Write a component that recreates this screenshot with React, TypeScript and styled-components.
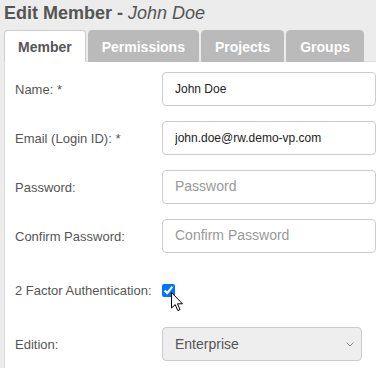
import { FC } from 'react'
import styled, { createGlobalStyle } from 'styled-components'

const GlobalStyle = createGlobalStyle`
  html, body {
    margin: 0;
    padding: 0;
    background: #ececec;
    font-family: "Liberation Sans", Arial, sans-serif;
  }
`

const Page = styled.div`
  width: 376px;
  height: 368px;
  overflow: hidden;
  padding-left: 4px;
  box-sizing: border-box;
`

const Title = styled.h1`
  margin: 0;
  padding-top: 2px;
  font-size: 18px;
  line-height: 22px;
  font-weight: bold;
  color: #555555;
  white-space: nowrap;
`

const TitleName = styled.span`
  font-style: italic;
  font-weight: normal;
`

const TabBar = styled.div`
  display: flex;
  margin-top: 6px;
  height: 31px;
  border-bottom: 1px solid #dddddd;
`

const TabItem = styled.div<{ $active?: boolean }>`
  display: flex;
  align-items: center;
  height: 32px;
  box-sizing: border-box;
  padding: 1px 13px 0;
  margin-right: 2px;
  border: 1px solid ${(p) => (p.$active ? '#cccccc' : '#bababa')};
  border-bottom-color: ${(p) => (p.$active ? '#ffffff' : '#bababa')};
  border-radius: 4px 4px 0 0;
  background: ${(p) => (p.$active ? '#ffffff' : '#bababa')};
  color: ${(p) => (p.$active ? '#555555' : '#ffffff')};
  font-size: 14px;
  font-weight: bold;
  white-space: nowrap;
  position: relative;
  z-index: 1;
`

const Panel = styled.div`
  background: #ffffff;
  border-left: 1px solid #dddddd;
  padding: 10px 0 0 10px;
  min-height: 320px;
`

const Row = styled.div<{ $height?: number }>`
  display: flex;
  align-items: center;
  height: ${(p) => p.$height ?? 34}px;
  margin-bottom: 15px;
`

const Label = styled.label`
  width: 147px;
  flex-shrink: 0;
  font-size: 13px;
  color: #555555;
`

const TextInput = styled.input`
  width: 240px;
  height: 34px;
  box-sizing: border-box;
  padding: 0 12px;
  border: 1px solid #cccccc;
  border-radius: 4px;
  font-family: "Liberation Sans", Arial, sans-serif;
  font-size: 12px;
  color: #222222;
  background: #ffffff;
  outline: none;

  &::placeholder {
    font-size: 14px;
    color: #999999;
  }
`

const CheckWrap = styled.div`
  position: relative;
  display: flex;
`

const Checkbox = styled.input`
  width: 13px;
  height: 13px;
  margin: 1px 0 0 0;
`

const Cursor = styled.svg`
  position: absolute;
  left: 9px;
  top: 9px;
  pointer-events: none;
`

const SelectWrap = styled.div`
  position: relative;
  width: 200px;
`

const Select = styled.select`
  width: 200px;
  height: 34px;
  box-sizing: border-box;
  padding: 0 12px;
  border: 1px solid #cccccc;
  border-radius: 4px;
  background: #eeeeee;
  color: #555555;
  font-family: "Liberation Sans", Arial, sans-serif;
  font-size: 14px;
  appearance: none;
  outline: none;
`

const Chevron = styled.svg`
  position: absolute;
  right: 8px;
  top: 15px;
  pointer-events: none;
`

const fields = [
  { label: 'Name: *', value: 'John Doe' },
  { label: 'Email (Login ID): *', value: 'john.doe@rw.demo-vp.com' },
  { label: 'Password:', placeholder: 'Password' },
  { label: 'Confirm Password:', placeholder: 'Confirm Password' },
]

const tabs = ['Member', 'Permissions', 'Projects', 'Groups']

const App: FC = () => {
  return (
    <Page>
      <GlobalStyle />
      <Title>
        Edit Member - <TitleName>John Doe</TitleName>
      </Title>
      <TabBar>
        {tabs.map((t, i) => (
          <TabItem key={t} $active={i === 0}>
            {t}
          </TabItem>
        ))}
      </TabBar>
      <Panel>
        {fields.map((f) => (
          <Row key={f.label}>
            <Label>{f.label}</Label>
            <TextInput
              type={f.placeholder ? 'password' : 'text'}
              defaultValue={f.value}
              placeholder={f.placeholder}
            />
          </Row>
        ))}
        <Row $height={44}>
          <Label>2 Factor Authentication:</Label>
          <CheckWrap>
            <Checkbox type="checkbox" defaultChecked />
            <Cursor width="13" height="20" viewBox="0 0 13 20">
              <path
                d="M0.5 0.5 L0.5 16 L4.2 12.6 L6.8 18.6 L9 17.6 L6.5 11.8 L11.5 11.8 Z"
                fill="#ffffff"
                stroke="#000000"
                strokeWidth="1"
              />
            </Cursor>
          </CheckWrap>
        </Row>
        <Row>
          <Label>Edition:</Label>
          <SelectWrap>
            <Select defaultValue="enterprise">
              <option value="enterprise">Enterprise</option>
              <option value="standard">Standard</option>
            </Select>
            <Chevron width="8" height="5" viewBox="0 0 8 5">
              <path d="M0.5 0.5 L4 4 L7.5 0.5" fill="none" stroke="#888888" strokeWidth="1" />
            </Chevron>
          </SelectWrap>
        </Row>
      </Panel>
    </Page>
  )
}

export default App
